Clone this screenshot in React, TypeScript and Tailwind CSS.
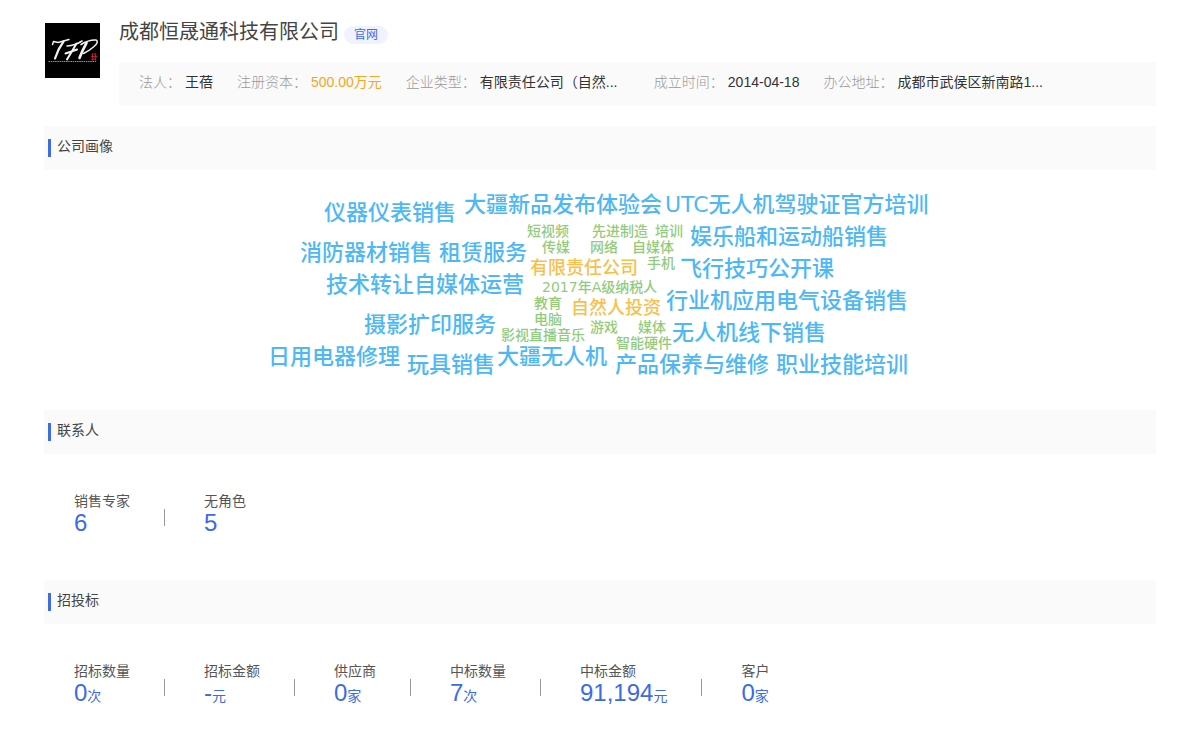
import { Fragment } from "react";
import type { ReactNode } from "react";

type Info = { label: string; value: string; tone?: string; width?: string };
type Stat = { label: string; value: string; unit?: string };
type Word = { text: string; x: number; y: number; kind: "tag" | "type" | "product" };

const infos: Info[] = [
  { label: "法人：", value: "王蓓" },
  { label: "注册资本：", value: "500.00万元", tone: "text-[#f5a623]" },
  { label: "企业类型：", value: "有限责任公司（自然...", width: "w-[150px]" },
  { label: "成立时间：", value: "2014-04-18" },
  { label: "办公地址：", value: "成都市武侯区新南路1...", width: "w-[150px]" },
];

const contacts: Stat[] = [
  { label: "销售专家", value: "6" },
  { label: "无角色", value: "5" },
];

const bids: Stat[] = [
  { label: "招标数量", value: "0", unit: "次" },
  { label: "招标金额", value: "-", unit: "元" },
  { label: "供应商", value: "0", unit: "家" },
  { label: "中标数量", value: "7", unit: "次" },
  { label: "中标金额", value: "91,194", unit: "元" },
  { label: "客户", value: "0", unit: "家" },
];

const wordStyles = {
  product: "text-[22px] text-[#4db8f5]",
  type: "text-[18px] text-[#f9bf4c]",
  tag: "text-[14px] text-[#93cb7c]",
};

// x is a word's left edge, y its vertical centre, both on the 672 x 240 cloud
const words: Word[] = [
  { text: "大疆新品发布体验会", x: 200, y: 35, kind: "product" },
  { text: "UTC无人机驾驶证官方培训", x: 401, y: 35, kind: "product" },
  { text: "仪器仪表销售", x: 60, y: 43, kind: "product" },
  { text: "娱乐船和运动船销售", x: 426, y: 67, kind: "product" },
  { text: "消防器材销售", x: 36, y: 83, kind: "product" },
  { text: "租赁服务", x: 175, y: 83, kind: "product" },
  { text: "飞行技巧公开课", x: 416, y: 99, kind: "product" },
  { text: "技术转让自媒体运营", x: 62, y: 115, kind: "product" },
  { text: "行业机应用电气设备销售", x: 402, y: 131, kind: "product" },
  { text: "摄影扩印服务", x: 100, y: 155, kind: "product" },
  { text: "无人机线下销售", x: 408, y: 163, kind: "product" },
  { text: "日用电器修理", x: 4, y: 187, kind: "product" },
  { text: "大疆无人机", x: 233, y: 187, kind: "product" },
  { text: "玩具销售", x: 143, y: 195, kind: "product" },
  { text: "产品保养与维修", x: 351, y: 195, kind: "product" },
  { text: "职业技能培训", x: 512, y: 195, kind: "product" },
  { text: "有限责任公司", x: 266, y: 98, kind: "type" },
  { text: "自然人投资", x: 307, y: 138, kind: "type" },
  { text: "短视频", x: 263, y: 61, kind: "tag" },
  { text: "先进制造", x: 328, y: 61, kind: "tag" },
  { text: "培训", x: 391, y: 61, kind: "tag" },
  { text: "传媒", x: 278, y: 77, kind: "tag" },
  { text: "网络", x: 326, y: 77, kind: "tag" },
  { text: "自媒体", x: 368, y: 77, kind: "tag" },
  { text: "手机", x: 383, y: 93, kind: "tag" },
  { text: "2017年A级纳税人", x: 278, y: 117, kind: "tag" },
  { text: "教育", x: 270, y: 133, kind: "tag" },
  { text: "电脑", x: 270, y: 149, kind: "tag" },
  { text: "游戏", x: 326, y: 157, kind: "tag" },
  { text: "媒体", x: 374, y: 157, kind: "tag" },
  { text: "影视直播音乐", x: 237, y: 165, kind: "tag" },
  { text: "智能硬件", x: 352, y: 173, kind: "tag" },
];

function Logo() {
  return (
    <svg viewBox="0 0 55 55" className="size-[55px] shrink-0" role="img" aria-label="TFP">
      <rect width="55" height="55" fill="#000" />
      <g fill="none" stroke="#f2f2f2" strokeLinecap="round" strokeLinejoin="round">
        <path d="M7.500 21.500l1-3 4.500 1 11-3" strokeWidth="1.5" />
        <path d="M18.500 18.500Q13 26 10 35.500" strokeWidth="2.2" />
        <path d="M22 23q8-.5 15-5" strokeWidth="1.6" />
        <path d="M31.500 20.500q-4 7-9.500 16M20.500 30.500q6-2 11.500-4" strokeWidth="2" />
        <path d="M41.500 20Q37 28 34.500 35" strokeWidth="2.6" />
        <path d="M36 21.500q8-5 15-4.500 3.500 2-2.500 7-4 3.500-10 6.500" strokeWidth="1.5" />
      </g>
      <path d="M3.500 38.500h48" stroke="#b5b5b5" strokeWidth="0.8" strokeDasharray="1.500 0.700" />
      <path d="M46.500 31h5M46 33.500h6M46.500 36.500h5M47.500 30.500v7M50.500 30.500v7" stroke="#c4161c" strokeWidth="1" fill="none" />
    </svg>
  );
}

function Section({ title, children }: { title: string; children: ReactNode }) {
  return (
    <section>
      <div className="flex h-11 items-start bg-[#fafafa] pl-1 pt-[10px]">
        <span className="mt-[3px] h-[18px] w-[3px] bg-[#3b6be6]" />
        <h2 className="ml-[6px] text-sm leading-5 text-[#444]">{title}</h2>
      </div>
      {children}
    </section>
  );
}

function Stats({ items }: { items: Stat[] }) {
  return (
    <dl className="flex h-[126px] pl-[30px] pt-[37px]">
      {items.map((item, i) => (
        <Fragment key={item.label}>
          {i > 0 && <span className="ml-[34px] mr-[39px] mt-[18px] h-[17px] w-px shrink-0 bg-[#999]" />}
          <div className="shrink-0">
            <dt className="text-sm leading-5 text-[#555]">{item.label}</dt>
            <dd className="text-2xl leading-6 text-[#3b6be6]">
              {item.value}
              {item.unit && <span className="text-sm leading-none">{item.unit}</span>}
            </dd>
          </div>
        </Fragment>
      ))}
    </dl>
  );
}

export default function App() {
  return (
    <main className="bg-white px-11 pt-5 font-['Liberation_Sans','Noto_Sans_CJK_SC',sans-serif] font-normal">
      <header className="flex gap-[19px] pl-px">
        <div className="pt-[3px]">
          <Logo />
        </div>
        <div className="min-w-0 flex-1">
          <div className="flex h-[42px] items-start gap-[5px]">
            <h1 className="text-xl leading-6 text-[#444]">成都恒晟通科技有限公司</h1>
            <a href="#" className="mt-[6px] rounded-full bg-[#eef3fd] px-[10px] text-xs leading-[18px] text-[#3b6be6]">
              官网
            </a>
          </div>
          <dl className="flex h-11 items-start gap-6 bg-[#fafafa] px-5 pt-[10px] text-sm leading-5">
            {infos.map((info) => (
              <div key={info.label} className="flex shrink-0 gap-1">
                <dt className="font-light text-[#999]">{info.label}</dt>
                <dd className={`whitespace-nowrap ${info.width ?? ""} ${info.tone ?? "text-[#333]"}`}>{info.value}</dd>
              </div>
            ))}
          </dl>
        </div>
      </header>

      <div className="mt-5">
        <Section title="公司画像">
          <div className="relative mx-auto h-60 w-[672px] font-['DejaVu_Sans','Noto_Sans_CJK_SC',sans-serif] font-medium">
            {words.map((word) => (
              <span
                key={word.text}
                className={`absolute -translate-y-1/2 whitespace-nowrap leading-none ${wordStyles[word.kind]}`}
                style={{ left: word.x, top: word.y }}
              >
                {word.text}
              </span>
            ))}
          </div>
        </Section>
        <Section title="联系人">
          <Stats items={contacts} />
        </Section>
        <Section title="招投标">
          <Stats items={bids} />
        </Section>
      </div>
    </main>
  );
}
